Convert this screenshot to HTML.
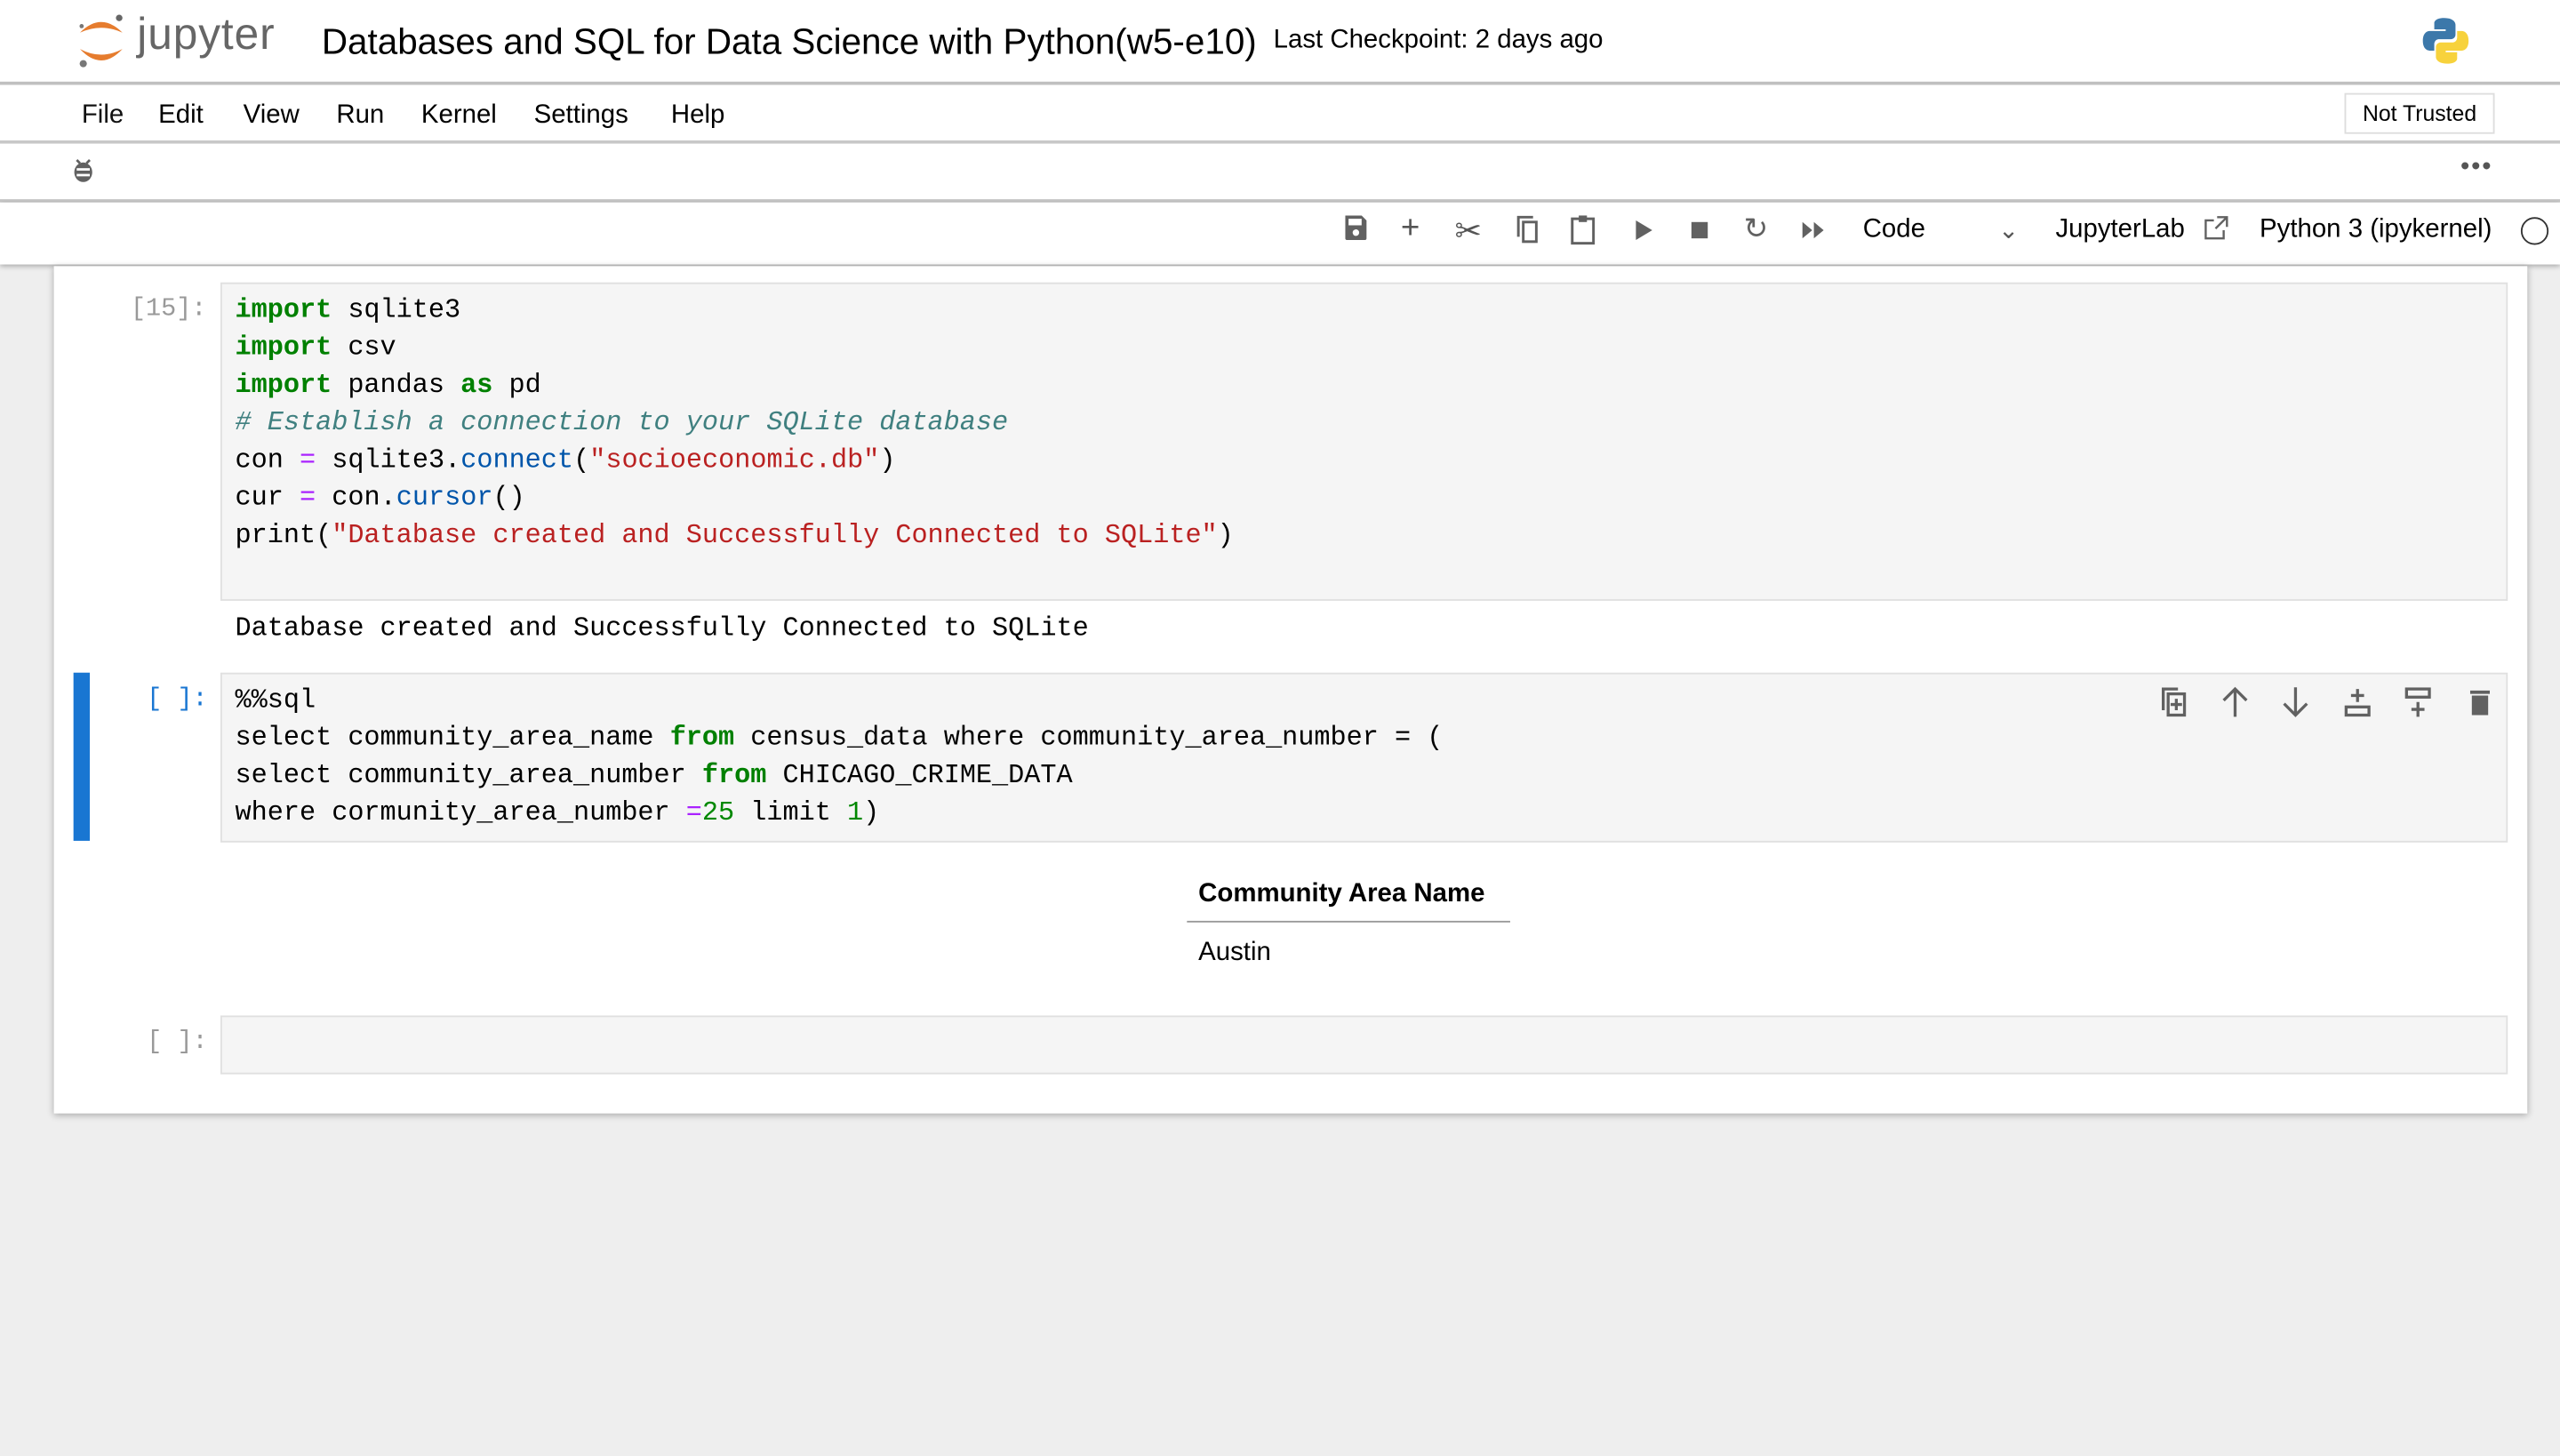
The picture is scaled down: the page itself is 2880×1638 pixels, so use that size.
<!DOCTYPE html>
<html><head><meta charset="utf-8"><style>
html,body{margin:0;padding:0;width:2880px;height:1638px;overflow:hidden;background:#eee}
#w{position:absolute;left:0;top:0;width:1568px;height:892px;transform:scale(1.83673);transform-origin:0 0;font-family:"Liberation Sans",sans-serif;background:#eeeeee}
.a{position:absolute}
.bar{position:absolute;left:0;width:1568px;background:#fff}
.mono{font-family:"Liberation Mono",monospace;font-size:16.45px;line-height:23px;white-space:pre}
.k{color:#008000;font-weight:bold}.s{color:#ba2121}.c{color:#408080;font-style:italic}.f{color:#0055aa}.o{color:#aa22ff}.n{color:#080}
.ic{position:absolute;top:131px}
</style></head><body><div id="w">
<div class="bar" style="top:0;height:50px;border-bottom:2px solid #c0c0c0"></div>
<svg class="a" style="left:46px;top:7px" width="34" height="36" viewBox="0 0 34 36"><path d="M3 13 Q16 0 29 13 Q16 7 3 13Z" fill="#e67c2e"/><path d="M3 23 Q16 37 29 23 Q16 30 3 23Z" fill="#e67c2e"/><circle cx="27" cy="4" r="2" fill="#666"/><circle cx="5" cy="32" r="2.2" fill="#777"/><circle cx="4" cy="9" r="1.3" fill="#777"/></svg>
<div class="a" style="left:84px;top:6px;font-size:27px;color:#666;letter-spacing:0.5px">jupyter</div>
<div class="a" style="left:197px;top:13px;font-size:22px;color:#000">Databases and SQL for Data Science with Python(w5-e10)</div>
<div class="a" style="left:780px;top:16px;font-size:16px;color:#000">Last Checkpoint: 2 days ago</div>
<svg class="a" style="left:1482px;top:9px" width="32" height="32" viewBox="0 0 32 32"><path d="M15 2c-6 0-6 3-6 3v4h7v1H6s-4 0-4 6 4 6 4 6h3v-4s0-3 3-3h7s3 0 3-3V6s0-4-7-4z" fill="#3c78aa"/><path d="M17 30c6 0 6-3 6-3v-4h-7v-1h10s4 0 4-6-4-6-4-6h-3v4s0 3-3 3h-7s-3 0-3 3v6s0 4 7 4z" fill="#f7d23c"/></svg>
<div class="bar" style="top:52px;height:34px;border-bottom:2px solid #c8c8c8"></div>
<div class="a" style="left:50px;top:62px;font-size:16px;color:#111">File</div>
<div class="a" style="left:97px;top:62px;font-size:16px">Edit</div>
<div class="a" style="left:149px;top:62px;font-size:16px">View</div>
<div class="a" style="left:206px;top:62px;font-size:16px">Run</div>
<div class="a" style="left:258px;top:62px;font-size:16px">Kernel</div>
<div class="a" style="left:327px;top:62px;font-size:16px">Settings</div>
<div class="a" style="left:411px;top:62px;font-size:16px">Help</div>
<div class="a" style="left:1436px;top:57px;width:90px;height:23px;border:1px solid #ddd;font-size:13.5px;line-height:23px;text-align:center">Not Trusted</div>
<div class="bar" style="top:88px;height:34px;border-bottom:2px solid #c8c8c8"></div>
<svg class="a" style="left:44px;top:96px" width="14" height="16" viewBox="0 0 14 16"><ellipse cx="7" cy="9.5" rx="5.5" ry="6" fill="#616161"/><rect x="3" y="7" width="8" height="1.5" fill="#fff"/><rect x="3" y="10.5" width="8" height="1.5" fill="#fff"/><path d="M3 2l2 2M11 2l-2 2" stroke="#616161" stroke-width="1.5"/></svg>
<div class="a" style="left:1507px;top:94px;font-size:16px;color:#555;letter-spacing:1px">•••</div>
<div class="bar" style="top:124px;height:38px;box-shadow:0 1px 3px rgba(0,0,0,.3)"></div>
<svg class="ic" style="left:822px" width="17" height="17" viewBox="0 0 17 17"><path d="M2 1h10l3 3v11a1 1 0 0 1-1 1H3a1 1 0 0 1-1-1z" fill="#616161"/><rect x="4" y="3" width="8" height="4" fill="#fff"/><circle cx="8.5" cy="11.5" r="2" fill="#fff"/></svg>
<div class="a" style="left:858px;top:129px;font-size:20px;color:#555">+</div>
<div class="a" style="left:891px;top:129px;font-size:20px;color:#555">✂</div>
<svg class="ic" style="left:927px" width="17" height="19" viewBox="0 0 17 19"><path d="M3 14V2h9" fill="none" stroke="#616161" stroke-width="1.6"/><rect x="6" y="5" width="8" height="12" fill="none" stroke="#616161" stroke-width="1.6"/></svg>
<svg class="ic" style="left:961px" width="17" height="19" viewBox="0 0 17 19"><rect x="2" y="3" width="13" height="15" fill="none" stroke="#616161" stroke-width="1.6"/><rect x="6" y="1" width="5" height="4" fill="#616161"/></svg>
<svg class="ic" style="left:1001px;top:134px" width="12" height="14"><path d="M1 1l10 6-10 6z" fill="#616161"/></svg>
<div class="a" style="left:1036px;top:136px;width:10px;height:10px;background:#616161"></div>
<div class="a" style="left:1068px;top:130px;font-size:18px;color:#616161">↻</div>
<svg class="a" style="left:1103px;top:135px" width="16" height="12"><path d="M1 1l6 5-6 5zM8 1l6 5-6 5z" fill="#616161"/></svg>
<div class="a" style="left:1141px;top:132px;font-size:16px;color:#000">Code</div>
<div class="a" style="left:1224px;top:132px;font-size:15px;color:#555">⌄</div>
<div class="a" style="left:1259px;top:132px;font-size:16px;color:#000">JupyterLab</div>
<svg class="a" style="left:1349px;top:132px" width="16" height="16"><path d="M7 3H2v11h11V9M9 1h6v6M15 1L8 8" fill="none" stroke="#616161" stroke-width="1.3"/></svg>
<div class="a" style="left:1384px;top:132px;font-size:16px;color:#000">Python 3 (ipykernel)</div>
<div class="a" style="left:1544px;top:133px;width:15px;height:15px;border:1.5px solid #333;border-radius:50%"></div>

<div class="a" style="left:33px;top:163px;width:1515px;height:519px;background:#fff;box-shadow:0 1px 4px rgba(0,0,0,.3)"></div>
<div class="a mono" style="left:80px;top:178px;color:#999;font-size:15.5px">[15]:</div>
<div class="a" style="left:135px;top:173px;width:1399px;height:193px;background:#f5f5f5;border:1px solid #e0e0e0"></div>
<div class="a mono" style="left:144px;top:178px"><span class="k">import</span> sqlite3
<span class="k">import</span> csv
<span class="k">import</span> pandas <span class="k">as</span> pd
<span class="c"># Establish a connection to your SQLite database</span>
con <span class="o">=</span> sqlite3<span>.</span><span class="f">connect</span>(<span class="s">"socioeconomic.db"</span>)
cur <span class="o">=</span> con<span>.</span><span class="f">cursor</span>()
print(<span class="s">"Database created and Successfully Connected to SQLite"</span>)</div>
<div class="a mono" style="left:144px;top:373px">Database created and Successfully Connected to SQLite</div>

<div class="a" style="left:45px;top:412px;width:10px;height:103px;background:#1976d2"></div>
<div class="a mono" style="left:90px;top:417px;color:#1976d2;font-size:15.5px">[ ]:</div>
<div class="a" style="left:135px;top:412px;width:1399px;height:102px;background:#f5f5f5;border:1px solid #e0e0e0"></div>
<div class="a mono" style="left:144px;top:417px">%%sql
select community_area_name <span class="k">from</span> census_data where community_area_number = (
select community_area_number <span class="k">from</span> CHICAGO_CRIME_DATA
where cormunity_area_number <span class="o">=</span><span class="n">25</span> limit <span class="n">1</span>)</div>
<svg class="a" style="left:1322px;top:420px" width="206" height="20" viewBox="0 0 206 20">
<g fill="none" stroke="#616161" stroke-width="1.8"><path d="M3 15V2h9"/><rect x="6" y="5" width="10" height="13"/><path d="M11 8v7M7.5 11.5h7"/>
<path d="M47 19V3M40 9l7-7 7 7"/><path d="M84 1v16M77 11l7 7 7-7"/>
<path d="M122 2v8M118 6h8"/><rect x="115" y="13" width="14" height="5"/>
<rect x="152" y="2" width="14" height="5"/><path d="M159 10v9M155 14.5h8"/></g>
<path d="M191 3h12v2h-12zM192 6h10v12h-10z" fill="#616161"/></svg>

<div class="a" style="left:734px;top:539px;font-size:16px;font-weight:bold;color:#000">Community Area Name</div>
<div class="a" style="left:727px;top:564px;width:198px;height:1px;background:#999"></div>
<div class="a" style="left:734px;top:575px;font-size:16px;color:#000">Austin</div>

<div class="a mono" style="left:90px;top:627px;color:#999;font-size:15.5px">[ ]:</div>
<div class="a" style="left:135px;top:622px;width:1399px;height:34px;background:#f5f5f5;border:1px solid #e0e0e0"></div>
</div></body></html>
